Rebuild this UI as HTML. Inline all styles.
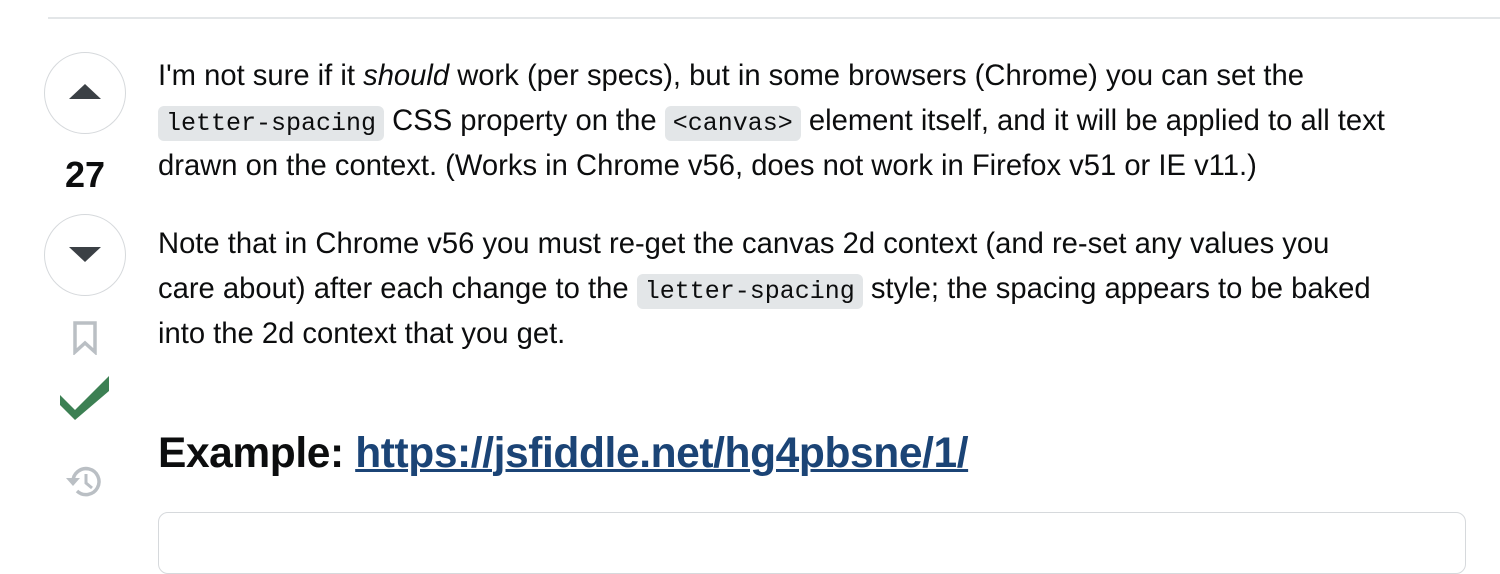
<!DOCTYPE html>
<html><head><meta charset="utf-8"><style>
html,body{margin:0;padding:0;background:#fff;width:1500px;height:536px;overflow:hidden;font-family:"Liberation Sans",Arial,sans-serif;color:#0c0d0e}
.top{position:absolute;left:48px;right:0;top:17px;height:2px;background:#e3e6e8}
.circ{position:absolute;left:44px;width:80px;height:80px;border:1.5px solid #d6d9dc;border-radius:50%}
.num{position:absolute;left:44px;width:82px;text-align:center;top:154px;font-size:36px;font-weight:bold;color:#0c0d0e}
.txt{position:absolute;left:158px;font-size:29.2px;white-space:nowrap}
.ln{height:45px;line-height:45px}
code{font-family:"Liberation Mono",monospace;font-size:25px;background:#e3e6e8;border-radius:6px;padding:3px 8px;color:#0c0d0e}
h2{position:absolute;left:158px;top:430px;margin:0;font-size:42.5px;font-weight:bold;letter-spacing:-0.4px}
h2 a{color:#1b4476;text-decoration:underline;text-decoration-thickness:3px}
.box{position:absolute;left:158px;top:512px;width:1306px;height:60px;border:1.5px solid #d6d9dc;border-radius:10px}
</style></head><body>
<div class="top"></div>
<div class="circ" style="top:52px"></div>
<svg style="position:absolute;left:66px;top:82px" width="38" height="20"><polygon points="19,2 35,17 3,17" fill="#3b4045"/></svg>
<div class="num">27</div>
<div class="circ" style="top:214px"></div>
<svg style="position:absolute;left:66px;top:244px" width="38" height="20"><polygon points="3,3 35,3 19,18" fill="#3b4045"/></svg>
<svg style="position:absolute;left:72px;top:321px" width="26" height="34"><path d="M3 2h20v29l-10-9-10 9z" fill="none" stroke="#babfc4" stroke-width="3.5"/></svg>
<svg style="position:absolute;left:60px;top:370px" width="50" height="52"><path d="M0 25l15 15 L49 6v15L15 50 0 35z" fill="#3c8053"/></svg>
<svg style="position:absolute;left:64px;top:464px" width="40" height="36"><path d="M9 18a13 13 0 1 1 4 9" fill="none" stroke="#babfc4" stroke-width="3.5"/><polygon points="2,14 16,14 9,22" fill="#babfc4"/><path d="M22 10v9l6 5" fill="none" stroke="#babfc4" stroke-width="3"/></svg>
<div class="txt" style="top:54px">
<div class="ln">I'm not sure if it <i>should</i> work (per specs), but in some browsers (Chrome) you can set the</div>
<div class="ln"><code>letter-spacing</code> CSS property on the <code>&lt;canvas&gt;</code> element itself, and it will be applied to all text</div>
<div class="ln">drawn on the context. (Works in Chrome v56, does not work in Firefox v51 or IE v11.)</div>
</div>
<div class="txt" style="top:222px">
<div class="ln">Note that in Chrome v56 you must re-get the canvas 2d context (and re-set any values you</div>
<div class="ln">care about) after each change to the <code>letter-spacing</code> style; the spacing appears to be baked</div>
<div class="ln">into the 2d context that you get.</div>
</div>
<h2>Example: <a>https://jsfiddle.net/hg4pbsne/1/</a></h2>
<div class="box"></div>
</body></html>
